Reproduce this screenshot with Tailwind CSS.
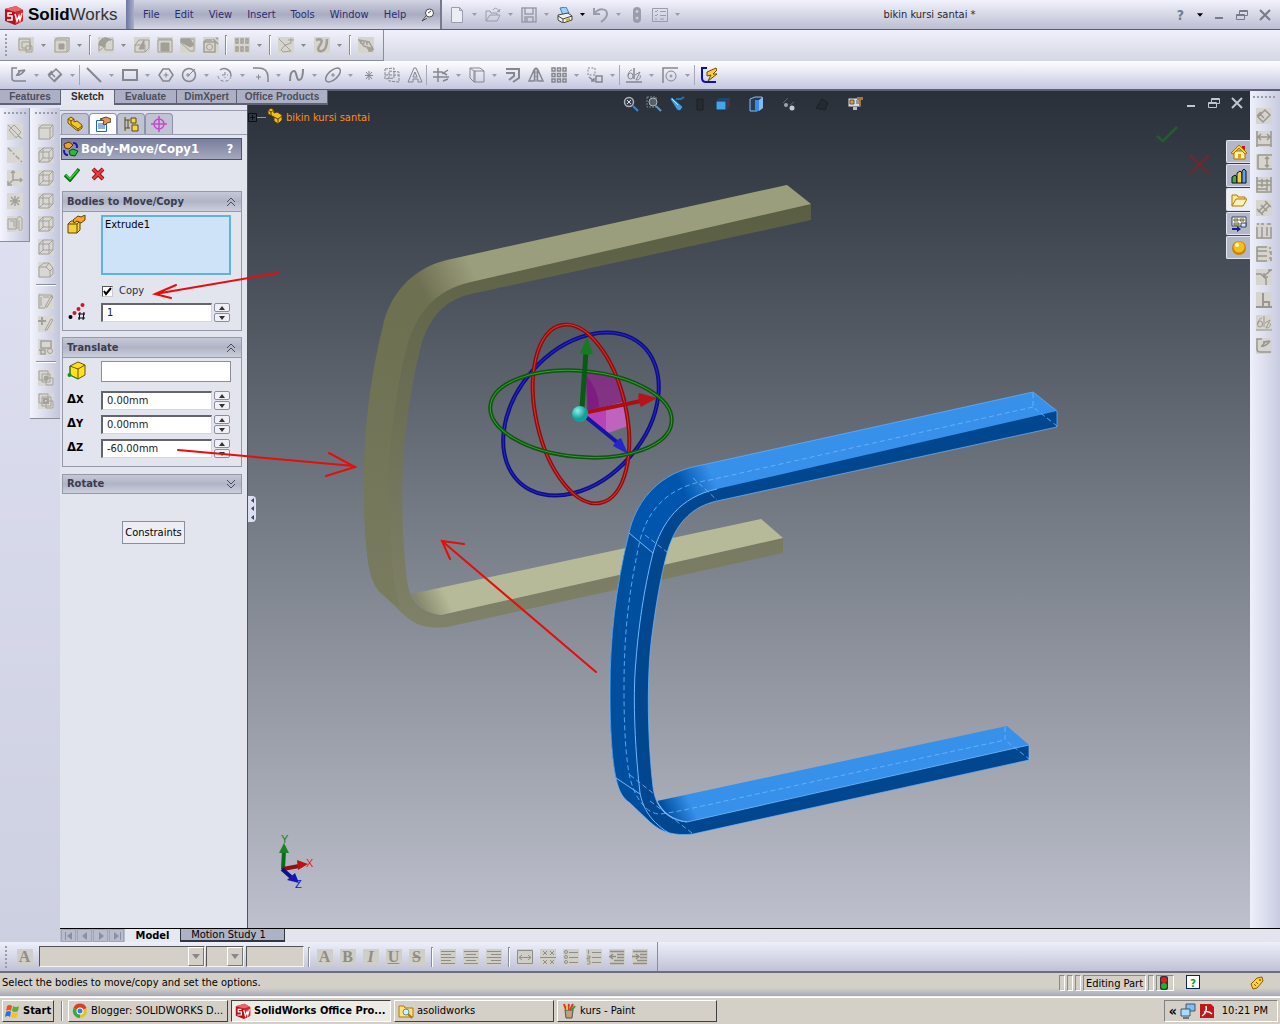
<!DOCTYPE html>
<html lang="en">
<head>
<meta charset="utf-8">
<meta name="viewport" content="width=device-width, initial-scale=1">
<title>SolidWorks - bikin kursi santai</title>
<script src="https://cdn.jsdelivr.net/npm/@tailwindcss/browser@4"></script>
</head>
<body class="flex min-h-screen flex-col overflow-x-hidden bg-[#dfe2f0] font-['DejaVu_Sans_Condensed','Noto_Sans',sans-serif] text-[11px] leading-4 text-black">

<!-- Shared glyphs -->
<svg class="absolute size-0" aria-hidden="true">
  <defs>
    <symbol id="dd" viewBox="0 0 5 3"><path d="M0 0h5L2.500 3z" fill="currentColor" stroke="none"/></symbol>
    <symbol id="cube" viewBox="0 0 16 16"><path d="M1 5h10v10H1zM1 5l4-4h10v10l-4 4M11 5l4-4M5 1v10h10M5 11l-4 4"/></symbol>
    <symbol id="sw" viewBox="0 0 20 20"><path d="M1 4l11-3 7 4v11l-8 4-10-4z" fill="#b3121b"/><path d="M1 4l11-3 7 4-8 2z" fill="#e8666b"/><path d="M11 7l8-2v11l-8 4z" fill="#d8232d"/><path d="M8 8H4v3h4v4H3M11 9l2 7 2-5 1 4 2-7" fill="none" stroke="#fff" stroke-width="1.500"/></symbol>
    <symbol id="restore" viewBox="0 0 12 12"><path d="M3.500 1.500h8v5h-8zM.5 5.500h8v5h-8z" fill="none" stroke="currentColor"/><path d="M3 2.500h9M0 6.500h9" stroke="currentColor"/></symbol>
    <symbol id="close" viewBox="0 0 12 12"><path d="M1 1l10 10M11 1L1 11" stroke="currentColor" stroke-width="2" fill="none"/></symbol>
    <symbol id="upglyph" viewBox="0 0 14 8"><path d="M4 6h6L7 2z" fill="#333" stroke="none"/></symbol>
    <symbol id="downglyph" viewBox="0 0 14 8"><path d="M4 2h6L7 6z" fill="#333" stroke="none"/></symbol>
  </defs>
</svg>

<!-- Title bar -->
<header class="flex h-[30px] shrink-0 items-stretch border-b border-[#5c5e6e] bg-linear-to-b from-[#f1f2fc] to-[#bcbfd2]">
  <div class="flex w-[126px] items-center gap-1 pl-1 font-['Liberation_Sans',Arial,sans-serif] text-[17px] text-black">
    <svg class="size-5"><use href="#sw"/></svg>
    <span><b>Solid</b><span class="text-[#333]">Works</span></span>
  </div>
  <div class="w-2 bg-linear-to-r from-[#6f76a0] to-[#a9aec8]"></div>
  <nav class="flex w-[308px] items-center gap-[15px] border-r-2 border-[#77798c] bg-linear-to-b from-[#d2d4e2] via-[#a9acc2] to-[#d5d7e6] pt-px pl-[9px] text-[#2c2c70]">
    <a href="#">File</a><a href="#">Edit</a><a href="#">View</a><a href="#">Insert</a><a href="#">Tools</a><a href="#">Window</a><a href="#">Help</a>
    <button aria-label="Pin menu"><svg class="size-3.5 fill-white stroke-[#444]" viewBox="0 0 14 14"><circle cx="8.500" cy="5" r="4"/><path d="M5 8l-4 5 5-3M7 5l3-2"/></svg></button>
  </nav>
  <div class="flex items-center fill-none stroke-[#9a9cab] pl-[3px] text-[#9a9cab] [&>button]:grid [&>button]:h-full [&>button]:w-[23px] [&>button]:place-items-center [&>[data-menu]]:w-[13px] [&>button>svg]:size-4 [&>[data-menu]>svg]:h-[3px] [&>[data-menu]>svg]:w-[5px]">
    <button aria-label="New"><svg viewBox="0 0 16 16"><path d="M2.500.5h8l3 3v12h-11zM10.500.5v3h3" fill="#eceef6"/></svg></button>
    <button data-menu aria-label="New options"><svg><use href="#dd"/></svg></button>
    <button aria-label="Open"><svg viewBox="0 0 16 16"><path d="M1 14V4h4l1 2h6v2M1 14l4-6h10l-3 6zM8 3c2-3 5-2 6 2M12 4l2 1 1-3"/></svg></button>
    <button data-menu aria-label="Open options"><svg><use href="#dd"/></svg></button>
    <button aria-label="Save"><svg viewBox="0 0 16 16"><path d="M1 1h14v14H1zM4 1v6h8V1M4 15v-5h8v5M6 11v4" stroke-width="1.500"/></svg></button>
    <button data-menu aria-label="Save options"><svg><use href="#dd"/></svg></button>
    <button aria-label="Print"><svg viewBox="0 0 16 16"><path d="M3 1l6-1 3 6-6 2z" fill="#9fd0f5" stroke="#3f7fb0"/><path d="M1 8l10-2 4 3v4l-9 3-5-3z" fill="#eee" stroke="#444"/><path d="M1 9l5 3 9-3M6 12v4" stroke="#444"/><path d="M9 13l4-1" stroke="#c8b020" stroke-width="2"/></svg></button>
    <button data-menu class="text-black" aria-label="Print options"><svg><use href="#dd"/></svg></button>
    <button aria-label="Undo"><svg viewBox="0 0 16 16"><path d="M1 1v6h6M2 6c4-5 12-5 12 1 0 4-3 6-6 8" stroke-width="2"/></svg></button>
    <button data-menu aria-label="Undo options"><svg><use href="#dd"/></svg></button>
    <button aria-label="Rebuild"><svg viewBox="0 0 16 16"><rect x="4.500" y=".5" width="7" height="15" rx="3" fill="#9a9cab"/><circle cx="8" cy="4.500" r="2" fill="#ccd"/><circle cx="8" cy="11" r="2" fill="#ccd"/></svg></button>
    <button aria-label="Options"><svg viewBox="0 0 16 16"><path d="M.5 1.500h15v13H.5zM3 4l1 1 2-2M3 8l1 1 2-2M3 12h2M8 4.500h6M8 8.500h6M8 12h4"/></svg></button>
    <button data-menu aria-label="More options"><svg><use href="#dd"/></svg></button>
  </div>
  <h1 class="grid flex-1 place-items-center pt-px pl-1.5 text-[#26262e]">bikin kursi santai *</h1>
  <div class="flex items-center text-[#777a88] [&>button]:grid [&>button]:w-[23px] [&>button]:place-items-center [&>button>svg]:size-3">
    <button class="-mr-1 text-sm font-bold" aria-label="Help">?</button>
    <button class="text-black" aria-label="Help options"><svg class="p-[3px]"><use href="#dd"/></svg></button>
    <button class="-ml-1" aria-label="Minimize"><svg viewBox="0 0 12 12"><path d="M2 9h8" stroke="currentColor" stroke-width="2"/></svg></button>
    <button aria-label="Restore"><svg><use href="#restore"/></svg></button>
    <button class="mr-1" aria-label="Close"><svg><use href="#close"/></svg></button>
  </div>
</header>

<!-- Features toolbar -->
<div class="flex h-[31px] shrink-0 bg-linear-to-b from-[#eff0fb] to-[#d5d7e4]">
  <div class="flex items-center border-r border-b border-[#8a8c98] bg-linear-to-b from-[#f1f2fd] to-[#cfd1df] fill-none stroke-[#a19f98] pr-1.5 pl-[5px] text-[#888] [&>button]:grid [&>button]:h-full [&>button]:w-[23px] [&>button]:place-items-center [&>[data-menu]]:w-[13px] [&>button>svg]:size-4 [&>button>svg]:bg-[#d6d4cf] [&>[data-menu]>svg]:h-[3px] [&>[data-menu]>svg]:w-[5px] [&>[data-menu]>svg]:bg-transparent [&>hr]:mx-[3px] [&>hr]:h-5 [&>hr]:w-0.5 [&>hr]:border-l [&>hr]:border-[#8a8c98] [&>hr]:bg-white">
    <span class="mr-[7px] h-[22px] border-l-2 border-dotted border-[#9a9cab]"></span>
    <button aria-label="Extruded boss"><svg viewBox="0 0 16 16"><path d="M1 2h11v11H1zM4 5h8v8M4 5v6h4M8 9h6v6H8z"/></svg></button>
    <button data-menu aria-label="Boss options"><svg><use href="#dd"/></svg></button>
    <button aria-label="Extruded cut"><svg viewBox="0 0 16 16"><path d="M1 3h12v12H1zM1 3l2-2h12v12l-2 2"/><path d="M5 7h5v5H5z" fill="#a19f98"/></svg></button>
    <button data-menu aria-label="Cut options"><svg><use href="#dd"/></svg></button>
    <hr>
    <button aria-label="Fillet"><svg viewBox="0 0 16 16"><path d="M1 8c0-4 3-7 7-7l7 2v10H7V9l-6 5z"/><path d="M1 8c0-4 3-7 7-7l5 2c-4 0-6 3-6 7z" fill="#a19f98"/></svg></button>
    <button data-menu aria-label="Fillet options"><svg><use href="#dd"/></svg></button>
    <button aria-label="Rib"><svg viewBox="0 0 16 16"><path d="M1 8h10v7H1zM1 8l4-5h10v8l-4 4"/><path d="M5 12l5-9v9z" fill="#a19f98"/></svg></button>
    <button aria-label="Shell"><svg viewBox="0 0 16 16"><path d="M1 3h14v12H1z"/><path d="M4 6h8v8H4zM1 2h14" fill="#a19f98"/></svg></button>
    <button aria-label="Draft"><svg viewBox="0 0 16 16"><path d="M1 2h13v12h-4L1 6z"/><path d="M1 2h9l4 6-4 2-9-5z" fill="#a19f98"/></svg></button>
    <button aria-label="Hole wizard"><svg viewBox="0 0 16 16"><path d="M1 5h11v10H1zM1 5l2-2h6M10 2l5 5M13 1l2 1M12 5v8" stroke-width="1.500"/><circle cx="6.500" cy="10" r="3"/></svg></button>
    <hr>
    <button aria-label="Linear pattern"><svg viewBox="0 0 16 16"><path d="M2 2h2v4H2zM7 2h2v4H7zM12 2h2v4h-2zM2 10h2v4H2zM7 10h2v4H7zM12 10h2v4h-2z" stroke-width="1.500"/></svg></button>
    <button data-menu aria-label="Pattern options"><svg><use href="#dd"/></svg></button>
    <hr>
    <button aria-label="Reference geometry"><svg viewBox="0 0 16 16"><path d="M1 2l6 6 6-2M3 13l4-5 6 6-8 1zM13 1v5M10 3h6"/></svg></button>
    <button data-menu aria-label="Geometry options"><svg><use href="#dd"/></svg></button>
    <button aria-label="Curves"><svg viewBox="0 0 16 16"><path d="M2 3c6-2 7 1 4 5s-2 7 2 6 5-6 5-12" stroke-width="2.500"/></svg></button>
    <button data-menu aria-label="Curve options"><svg><use href="#dd"/></svg></button>
    <hr>
    <button aria-label="Instant3D"><svg viewBox="0 0 16 16"><path d="M1 3l10 2 4 7-9-3zM3 4v3M6 4v3M9 5v3M9 11l5 3M14 10v4h-4" stroke-width="1.500"/></svg></button>
  </div>
</div>

<!-- Sketch toolbar -->
<div class="flex h-[30px] shrink-0 items-center border-b-2 border-[#5d6072] bg-linear-to-b from-white to-[#c5c7e0] fill-none stroke-[#85878f] pl-[7px] text-[#9a9cab] [&>button]:grid [&>button]:h-full [&>button]:w-[23px] [&>button]:place-items-center [&>[data-menu]]:w-[13px] [&>button>svg]:size-4 [&>[data-menu]>svg]:h-[3px] [&>[data-menu]>svg]:w-[5px] [&>hr]:h-5 [&>hr]:w-[3px] [&>hr]:border-0 [&>hr]:border-l [&>hr]:border-[#a5a7b8]">
  <button aria-label="Sketch"><svg viewBox="0 0 16 16"><path d="M6 1H1v10c0 2 1 3 3 3h11M5 8c3 1 7-2 9-5M7 4l7-1M6 8l3-4" stroke-width="1.500"/></svg></button>
  <button data-menu aria-label="Sketch options"><svg><use href="#dd"/></svg></button>
  <button aria-label="Smart dimension"><svg viewBox="0 0 16 16"><path d="M2 9l7-7 5 5-7 7zM1 8l4-4M5 7l3 3M7 15l8-8" stroke-width="1.500"/></svg></button>
  <button data-menu aria-label="Dimension options"><svg><use href="#dd"/></svg></button>
  <hr>
  <button aria-label="Line"><svg viewBox="0 0 16 16"><path d="M1 1l14 14" stroke-width="2"/></svg></button>
  <button data-menu aria-label="Line options"><svg><use href="#dd"/></svg></button>
  <button aria-label="Rectangle"><svg viewBox="0 0 16 16"><path d="M1 3h14v10H1z" stroke-width="2"/></svg></button>
  <button data-menu aria-label="Rectangle options"><svg><use href="#dd"/></svg></button>
  <button aria-label="Polygon"><svg viewBox="0 0 16 16"><path d="M5 2h6l4 6-4 6H5L1 8z" stroke-width="1.500"/><path d="M8 5.500v5M5.500 8h5"/></svg></button>
  <button aria-label="Circle"><svg viewBox="0 0 16 16"><circle cx="8" cy="8" r="6.500" stroke-width="1.500"/><path d="M5 8h4M7 6v4M8 8l6-6"/></svg></button>
  <button data-menu aria-label="Circle options"><svg><use href="#dd"/></svg></button>
  <button aria-label="Arc"><svg viewBox="0 0 16 16"><path d="M3 3c4-3 11-1 11 6" stroke-width="1.500"/><path d="M14 9c-1 7-12 7-13 0M5 8h6M8 5v6" stroke-dasharray="3 2"/></svg></button>
  <button data-menu aria-label="Arc options"><svg><use href="#dd"/></svg></button>
  <button aria-label="Sketch fillet"><svg viewBox="0 0 16 16"><path d="M0 1h5c6 0 10 3 10 9v5" stroke-width="1.500"/><path d="M3 10h5M5.500 7.500v5"/></svg></button>
  <button data-menu aria-label="Fillet options"><svg><use href="#dd"/></svg></button>
  <button aria-label="Spline"><svg viewBox="0 0 16 16"><path d="M1 14c0-7 1-10 4-10s2 9 5 9 4-4 4-11" stroke-width="2"/></svg></button>
  <button data-menu aria-label="Spline options"><svg><use href="#dd"/></svg></button>
  <button aria-label="Ellipse"><svg viewBox="0 0 16 16"><ellipse cx="8" cy="8" rx="9" ry="4.500" transform="rotate(-42 8 8)" stroke-width="1.500"/><path d="M6 8h4M8 6v4"/></svg></button>
  <button data-menu aria-label="Ellipse options"><svg><use href="#dd"/></svg></button>
  <button aria-label="Point"><svg viewBox="0 0 16 16"><path d="M8 4v9M4 8.500h8M5 5l6 7M11 5l-6 7"/></svg></button>
  <button aria-label="Construction plane"><svg viewBox="0 0 16 16"><path d="M1 2l9-1v10l-9 1zM5 4l10 1v10L5 14zM1 8h14" stroke-dasharray="3 1"/></svg></button>
  <button aria-label="Text"><svg viewBox="0 0 16 16"><path d="M7 1h2l6 14h-4v-3H6v3H1zM8 5l-2 5h4z"/></svg></button>
  <hr>
  <button aria-label="Trim entities"><svg viewBox="0 0 16 16"><path d="M5 1v14M0 5h9M0 10h16M9 7l6-4M9 5l5 3M10 14l5-2" stroke-width="1.500"/></svg></button>
  <button data-menu aria-label="Trim options"><svg><use href="#dd"/></svg></button>
  <button aria-label="Convert entities"><svg viewBox="0 0 16 16"><path d="M5 4h10v11H5zM1 1h10l4 3M1 1v10l4 4M1 1l4 3M6 4v11"/></svg></button>
  <button data-menu aria-label="Convert options"><svg><use href="#dd"/></svg></button>
  <button aria-label="Offset entities"><svg viewBox="0 0 16 16"><path d="M1 6h8v3l-5 4M1 2h13v9l-6 4" stroke-width="2"/></svg></button>
  <button aria-label="Mirror entities"><svg viewBox="0 0 16 16"><path d="M6.500 2L1 14h5.500M9.500 2L15 14H9.500M6 2h4M6.500 2v12M9.500 2v12" stroke-width="1.500"/><path d="M8 0v16" stroke-dasharray="3 1"/></svg></button>
  <button aria-label="Linear sketch pattern"><svg viewBox="0 0 16 16"><path d="M1 1h3v3H1zM6.500 1h3v3h-3zM12 1h3v3h-3zM1 6.500h3v3H1zM6.500 6.500h3v3h-3zM12 6.500h3v3h-3zM1 12h3v3H1zM6.500 12h3v3h-3zM12 12h3v3h-3z" stroke-width="1.500"/></svg></button>
  <button data-menu aria-label="Pattern options"><svg><use href="#dd"/></svg></button>
  <button aria-label="Move entities"><svg viewBox="0 0 16 16"><path d="M1 1h7v7H1z" stroke-dasharray="2 1.500"/><path d="M9 9h6v6H9zM2 10l5 4M7 11v3H4" stroke-width="1.500"/></svg></button>
  <button data-menu aria-label="Move options"><svg><use href="#dd"/></svg></button>
  <hr>
  <button aria-label="Display relations"><svg viewBox="0 0 16 16"><path d="M0 15h16M8 1v11" stroke-width="1.500"/><ellipse cx="4.500" cy="9" rx="2.500" ry="3"/><path d="M2 9c0-3 2-6 4-6M9 8l5-3-4 8c4 0 5-3 4-5"/></svg></button>
  <button data-menu aria-label="Relation options"><svg><use href="#dd"/></svg></button>
  <button aria-label="Quick snaps"><svg viewBox="0 0 16 16"><path d="M1 16V1h15" stroke-width="1.500"/><circle cx="9" cy="9" r="5"/><circle cx="9" cy="9" r="1"/></svg></button>
  <button data-menu aria-label="Snap options"><svg><use href="#dd"/></svg></button>
  <hr>
  <button aria-label="Rapid sketch"><svg viewBox="0 0 16 16"><path d="M6 1H1v10c0 3 2 4 4 4h10" stroke="#0b0bc8" stroke-width="2"/><path d="M15 1L6 5v4l4-1-3 6 9-7h-4l4-4z" fill="#ffd42a" stroke="#70420a"/></svg></button>
</div>

<main class="relative flex flex-1">
  <!-- Command tabs -->
  <nav class="absolute -top-px left-0 z-10 flex h-[15px] border-b-2 border-[#5f6272] bg-[#adb0c4] font-['Liberation_Sans',Arial,sans-serif] text-[10px] leading-[13px] font-bold text-[#4c4e5c] [&>a]:border-r [&>a]:border-[#5f6272] [&>a]:text-center">
    <a href="#" class="w-[61px]">Features</a>
    <a href="#" class="h-[15px] w-[54px] bg-[#e4e6f0] text-[#2c2c34]">Sketch</a>
    <a href="#" class="w-[62px]">Evaluate</a>
    <a href="#" class="w-[60px]">DimXpert</a>
    <a href="#" class="w-[91px]">Office Products</a>
  </nav>

  <!-- Left vertical toolbars -->
  <aside class="flex w-[60px] shrink-0 items-start bg-linear-to-b from-[#e1e3f4] to-[#cdd0e0] fill-none stroke-[#a3a19b] pt-[17px]">
    <div class="flex w-[30px] flex-col items-center border-r border-b border-[#8b8d9c] bg-linear-to-r from-[#f3f4fd] to-[#c3c6da] pt-1 pb-1.5 [&>button]:grid [&>button]:h-[23px] [&>button]:place-items-center [&>button>svg]:size-4 [&>button>svg]:bg-[#d9d7d3]">
      <span class="mb-1.5 w-[22px] border-t-2 border-dotted border-[#9a9cab]"></span>
      <button aria-label="Plane"><svg viewBox="0 0 16 16"><path d="M2 6l5-5 7 7-5 6zM1 1l14 14M11 12l4 3"/></svg></button>
      <button aria-label="Axis"><svg viewBox="0 0 16 16"><path d="M1 1l14 14" stroke-width="1.500" stroke-dasharray="5 2 2 2"/></svg></button>
      <button aria-label="Coordinate system"><svg viewBox="0 0 16 16"><path d="M6 1v9h9M6 10l-4 4M4 3l2-2 2 2M13 8l2 2-2 2M1 11v4h4" stroke-width="1.500"/></svg></button>
      <button aria-label="Reference point"><svg viewBox="0 0 16 16"><path d="M8 3v10M3 8h10M4 4l8 8M12 4l-8 8" stroke-width="1.500"/></svg></button>
      <button aria-label="Mate reference"><svg viewBox="0 0 16 16"><path d="M1 3h8v10H1zM3 5h4v6M10 13V3c0-3 5-3 5 0v10c0 2-3 2-3 0V4"/></svg></button>
    </div>
    <div class="flex w-[30px] flex-col items-center border-b border-[#8b8d9c] bg-linear-to-r from-[#f3f4fd] to-[#c3c6da] pt-1 pb-1.5 pl-0.5 [&>button]:grid [&>button]:h-[23px] [&>button]:place-items-center [&>button>svg]:size-4 [&>button>svg]:bg-[#d9d7d3] [&>hr]:my-[3px] [&>hr]:h-0.5 [&>hr]:w-5 [&>hr]:border-[#8b8d9c] [&>hr]:bg-white">
      <span class="mb-1.5 w-[22px] border-t-2 border-dotted border-[#9a9cab]"></span>
      <button aria-label="Front view"><svg viewBox="0 0 16 16"><path d="M1 4h11v11H1zM1 4l3-3h11v11l-3 3M12 4l3-3"/></svg></button>
      <button aria-label="Back view"><svg><use href="#cube"/></svg></button>
      <button aria-label="Left view"><svg><use href="#cube"/></svg></button>
      <button aria-label="Right view"><svg><use href="#cube"/></svg></button>
      <button aria-label="Top view"><svg><use href="#cube"/></svg></button>
      <button aria-label="Bottom view"><svg><use href="#cube"/></svg></button>
      <button aria-label="Isometric view"><svg viewBox="0 0 16 16"><path d="M1 5l5-4h5l4 5v6l-3 3H1zM1 5h7l4 4v6M8 5l3-4M12 9l3-3"/></svg></button>
      <hr>
      <button aria-label="Sketch plane"><svg viewBox="0 0 16 16"><path d="M1 2h13v3M1 2v13h6M3 4v9M5 4h6M7 14l6-11 2 1-6 10z"/></svg></button>
      <button aria-label="Add sketch"><svg viewBox="0 0 16 16"><path d="M4 1v8M0 5h8" stroke-width="2"/><path d="M7 14l6-11 2 1-6 10z"/></svg></button>
      <button aria-label="Modify sketch"><svg viewBox="0 0 16 16"><path d="M3 2h10v7H3zM1 11h6v3M3 11v4h5" stroke-width="1.500"/><circle cx="12" cy="12" r="2.500"/></svg></button>
      <hr>
      <button aria-label="Combine"><svg viewBox="0 0 16 16"><path d="M1 1h9v9H1zM4 4h8v8H4zM8 8h7v7H8z"/><circle cx="8" cy="8" r="2" fill="#a3a19b"/></svg></button>
      <button aria-label="Intersect"><svg viewBox="0 0 16 16"><path d="M1 1h9v9H1zM4 4h9v9H4zM8 8h7v7H8z"/><path d="M6 6h4v4H6z" stroke-width="2"/></svg></button>
    </div>
  </aside>

  <div class="flex min-w-0 flex-1 flex-col">
    <div class="flex flex-1">
      <!-- Property manager -->
      <section class="flex w-[188px] shrink-0 flex-col border-r border-[#50545f] bg-[#e2e5ee] pt-[19px]">
        <div class="flex h-[25px] items-end border-t border-b border-[#9a9db0] bg-[#dfe2ec] pl-px [&>button]:grid [&>button]:h-[21px] [&>button]:w-7 [&>button]:place-items-center [&>button]:rounded-t-sm [&>button]:border [&>button]:border-b-0 [&>button]:border-[#8f93a8] [&>button]:bg-[#c0c3d4] [&>button>svg]:size-4">
          <button aria-label="Feature tree"><svg viewBox="0 0 16 16" fill="#f7c81e" stroke="#6d5200"><path d="M1 3l3-2 3 2v3l3-1 5 4v3l-4 3-3-2-7-6z"/><path d="M1 3l3 2 3-2M4 5v3l7 5 4-3M11 13v2"/></svg></button>
          <button class="!bg-white" aria-label="Property manager"><svg viewBox="0 0 16 16"><path d="M1.500 4.500h10v11h-10z" fill="#fff" stroke="#1c62c0"/><path d="M3 8h7M3 10h7M3 12h7" stroke="#1c62c0"/><path d="M5 3l6-2 5 2v3l-4 1-2 2-2-1 1-3z" fill="#d79a5c" stroke="#6b3d16"/></svg></button>
          <button aria-label="Configurations"><svg viewBox="0 0 16 16" stroke="#5c4a00"><path d="M2 1v14M2 4h5M2 12h5M5 4v8" fill="none"/><path d="M8 2h5v5H8zM9 9h6v6H9z" fill="#f5d44a"/></svg></button>
          <button aria-label="DimXpert manager"><svg viewBox="0 0 16 16" fill="none" stroke="#c44bc8" stroke-width="1.500"><circle cx="8" cy="8" r="5"/><path d="M8 0v16M0 8h16"/></svg></button>
        </div>
        <div class="mt-[3px] mr-[5px] ml-px flex h-[22px] items-center gap-0.5 border border-[#4c5070] bg-linear-to-b from-[#787d9b] to-[#a5a9bf] px-px text-[13px] font-bold text-white">
          <svg class="size-4" viewBox="0 0 16 16"><path d="M1 3l5-2 4 3-4 4-4-1z" fill="#f2a02c" stroke="#5a3000"/><path d="M6 10l4-2 5 2-3 5-5-1z" fill="#2eb83a" stroke="#0a4a10"/><path d="M10 2c4 0 4 2 4 5M1 9c0 4 1 5 4 5" fill="none" stroke="#1414b8" stroke-width="2"/></svg>
          <h2 class="flex-1">Body-Move/Copy1</h2>
          <button class="w-5" aria-label="Feature help">?</button>
        </div>
        <div class="flex h-[31px] items-center gap-2.5 pb-1 pl-1 [&_svg]:size-4">
          <button aria-label="OK"><svg viewBox="0 0 16 16"><path d="M1 9l5 5L15 3" fill="none" stroke="#0d6e16" stroke-width="3.500"/><path d="M2 9l4 4 8-9" fill="none" stroke="#37d045" stroke-width="1.500"/></svg></button>
          <button aria-label="Cancel"><svg viewBox="0 0 16 16"><path d="M3 3l10 10M13 3L3 13" fill="none" stroke="#931018" stroke-width="4"/><path d="M3 3l10 10M13 3L3 13" fill="none" stroke="#ee3b42" stroke-width="2"/></svg></button>
        </div>

        <fieldset class="mr-[5px] ml-0.5 border border-[#9699ab] pb-2" aria-label="Bodies to Move/Copy">
          <button class="flex h-5 w-full items-center justify-between border-b border-[#9699ab] bg-linear-to-b from-[#c5c8d6] via-[#b1b4c6] to-[#ccd0dc] px-1 font-bold text-[#3a3c50]">Bodies to Move/Copy
            <svg class="mr-px size-2.5" viewBox="0 0 10 10" fill="none" stroke="#4a4d60"><path d="M1 5l4-4 4 4M1 9l4-4 4 4"/></svg></button>
          <div class="flex pt-[3px]">
            <svg class="mx-1 mr-3.5 size-5" viewBox="0 0 20 20" stroke="#5e4300"><path d="M1 9l3-3h9v9l-3 3H1z" fill="#f5cf3a"/><path d="M1 9h9v9M10 9l3-3" fill="none"/><path d="M6 5l5-4 3 1 4-2v5l-4 3-4-2-3 2z" fill="#f6a62c"/></svg>
            <textarea class="block h-[60px] w-[130px] resize-none border-2 border-[#5eb2e4] bg-[#cee3f7] px-0.5 leading-4 outline-none" aria-label="Selected bodies">Extrude1</textarea>
          </div>
          <label class="mt-2 ml-[39px] flex h-4 items-center gap-1.5 text-[#2c2e48]">
            <span class="relative grid size-[11px] place-items-center border border-t-[#555] border-l-[#555] border-[#ccc] bg-white"><input type="checkbox" checked class="absolute inset-0 size-full appearance-none"><svg class="size-[9px]" viewBox="0 0 9 9" fill="none" stroke="#000" stroke-width="2"><path d="M1 4l2 3 5-6"/></svg></span>Copy</label>
          <div class="mt-1 flex h-[19px]">
            <svg class="mr-3.5 ml-1 size-5" viewBox="0 0 20 20"><circle cx="3.500" cy="14" r="2"/><g fill="#d8102c"><circle cx="7.500" cy="10" r="2"/><circle cx="11.500" cy="6" r="2"/><circle cx="15.500" cy="2" r="2"/></g><path d="M13 9l-1 8M17 9l-1 8M11 11h7M11 15h7" stroke="#000"/></svg>
            <input class="w-[111px] border border-t-2 border-l-2 border-[#d5d5dd] border-t-[#63646c] border-l-[#63646c] bg-white px-1 text-[#222] outline-none" value="1" aria-label="Number of copies">
            <span class="ml-0.5 flex w-4 flex-col gap-px [&>button]:grid [&>button]:h-[9px] [&>button]:place-items-center [&>button]:rounded-xs [&>button]:border [&>button]:border-[#8b8e9c] [&>button]:bg-[#f0f1f6] [&_svg]:h-2 [&_svg]:w-3.5"><button aria-label="Increase"><svg><use href="#upglyph"/></svg></button><button aria-label="Decrease"><svg><use href="#downglyph"/></svg></button></span>
          </div>
        </fieldset>

        <fieldset class="mt-1.5 mr-[5px] ml-0.5 border border-[#9699ab] pb-2 [&_input]:text-[#222]" aria-label="Translate">
          <button class="flex h-5 w-full items-center justify-between border-b border-[#9699ab] bg-linear-to-b from-[#c5c8d6] via-[#b1b4c6] to-[#ccd0dc] px-1 font-bold text-[#3a3c50]">Translate
            <svg class="mr-px size-2.5" viewBox="0 0 10 10" fill="none" stroke="#4a4d60"><path d="M1 5l4-4 4 4M1 9l4-4 4 4"/></svg></button>
          <div class="flex pt-[3px]">
            <svg class="mr-3.5 ml-1 size-5" viewBox="0 0 20 20" stroke="#6d5200"><path d="M3 5l8-4 7 3v10l-7 4-8-4z" fill="#ffe21f"/><path d="M3 5l8 3v10M11 8l7-4" fill="none"/><path d="M3 5v9l8 4" fill="none" stroke="#1b8a24"/><circle cx="2.500" cy="14" r="2" fill="#1b8a24" stroke="none"/></svg>
            <input class="h-[21px] w-[130px] border border-[#8b8e9c] bg-white px-1 outline-none" aria-label="Translation reference">
          </div>
          <div class="mt-[9px] flex flex-col gap-[5px] [&>div]:flex [&>div]:h-[19px] [&_label]:w-[38px] [&_label]:pl-1 [&_label]:text-[13px] [&_label]:font-bold [&_input]:w-[111px] [&_input]:border [&_input]:border-t-2 [&_input]:border-l-2 [&_input]:border-[#d5d5dd] [&_input]:border-t-[#63646c] [&_input]:border-l-[#63646c] [&_input]:bg-white [&_input]:px-1 [&_input]:outline-none [&_button]:grid [&_button]:h-[9px] [&_button]:place-items-center [&_button]:rounded-xs [&_button]:border [&_button]:border-[#8b8e9c] [&_button]:bg-[#f0f1f6] [&_svg]:h-2 [&_svg]:w-3.5">
            <div><label for="dx">Δ<small class="text-[11px]">X</small></label><input id="dx" value="0.00mm"><span class="ml-0.5 flex w-4 flex-col gap-px"><button aria-label="Increase X"><svg><use href="#upglyph"/></svg></button><button aria-label="Decrease X"><svg><use href="#downglyph"/></svg></button></span></div>
            <div><label for="dy">Δ<small class="text-[11px]">Y</small></label><input id="dy" value="0.00mm"><span class="ml-0.5 flex w-4 flex-col gap-px"><button aria-label="Increase Y"><svg><use href="#upglyph"/></svg></button><button aria-label="Decrease Y"><svg><use href="#downglyph"/></svg></button></span></div>
            <div><label for="dz">Δ<small class="text-[11px]">Z</small></label><input id="dz" value="-60.00mm"><span class="ml-0.5 flex w-4 flex-col gap-px"><button aria-label="Increase Z"><svg><use href="#upglyph"/></svg></button><button aria-label="Decrease Z"><svg><use href="#downglyph"/></svg></button></span></div>
          </div>
        </fieldset>

        <button class="mt-[7px] mr-[5px] ml-0.5 flex h-5 items-center justify-between border border-[#9699ab] bg-linear-to-b from-[#c5c8d6] via-[#b1b4c6] to-[#ccd0dc] px-1 font-bold text-[#3a3c50]">Rotate
          <svg class="mr-px size-2.5" viewBox="0 0 10 10" fill="none" stroke="#4a4d60"><path d="M1 1l4 4 4-4M1 5l4 4 4-4"/></svg></button>
        <button class="mt-[27px] h-[23px] w-[63px] self-center border border-[#8b8e9c] bg-[#eceef4]">Constraints</button>
      </section>

      <!-- Graphics area -->
      <section class="relative min-w-0 flex-1 overflow-hidden bg-linear-to-b from-[#2a303a] via-[#747a83] to-[#bec1cd]">
        <svg class="absolute inset-0 size-full" viewBox="248 91 1002 837" preserveAspectRatio="xMinYMin meet" role="img" aria-label="Chair frame model">
          <defs>
            <path id="body" d="M1033 392L693 467C655 476 635 505 629 533C615 590 610 640 610 690C610 730 612 760 616 778C619 792 623 798 630 803L650 822C662 833 675 836 693 834L1029 760V745L687 822C665 820 655 805 653 787C648 745 646 680 652 635C656 605 660 580 667 553C675 525 690 507 717 501L1057 427V411Z"/>
            <path id="wide" d="M1033 392L693 467C655 476 635 505 629 533C615 590 610 640 610 690C610 730 612 760 616 778C619 792 630 803 645 814L640 793C634 740 633 690 636 660C639 620 646 580 653 553C662 522 680 497 717 489L1057 411Z"/>
            <path id="lower" d="M657 801L1007 726L1029 745L687 822C673 820 663 813 657 801Z"/>
            <linearGradient id="bluetop" gradientUnits="userSpaceOnUse" x1="680" y1="484" x2="710" y2="470"><stop offset="0" stop-color="#0056ad"/><stop offset="1" stop-color="#3790ea"/></linearGradient>
            <linearGradient id="bluelow" gradientUnits="userSpaceOnUse" x1="664" y1="810" x2="688" y2="798"><stop offset="0" stop-color="#00509f"/><stop offset="1" stop-color="#3790ea"/></linearGradient>
            <linearGradient id="creamtop" gradientUnits="userSpaceOnUse" x1="665" y1="490" x2="715" y2="468"><stop offset="0" stop-color="#6e7052"/><stop offset="1" stop-color="#9b9e7c"/></linearGradient>
            <linearGradient id="creamlow" gradientUnits="userSpaceOnUse" x1="664" y1="810" x2="690" y2="798"><stop offset="0" stop-color="#85876a"/><stop offset="1" stop-color="#b6ba98"/></linearGradient>
            <linearGradient id="creamside" x1="0" y1="0" x2="0" y2="1"><stop offset="0" stop-color="#585c41"/><stop offset="1" stop-color="#7f8268"/></linearGradient>
            <linearGradient id="creamwide" gradientUnits="userSpaceOnUse" x1="0" y1="530" x2="0" y2="810"><stop offset="0" stop-color="#7a7c60" stop-opacity="0"/><stop offset="1" stop-color="#7a7c60"/></linearGradient>
            <radialGradient id="ball" cx=".35" cy=".3"><stop offset="0" stop-color="#8ff0ea"/><stop offset="1" stop-color="#12a09b"/></radialGradient>
          </defs>

          <g transform="translate(-246 -207)">
            <use href="#body" fill="url(#creamside)"/>
            <use href="#wide" fill="url(#creamtop)"/>
            <use href="#wide" fill="url(#creamwide)"/>
            <use href="#lower" fill="url(#creamlow)"/>
          </g>

          <path d="M586 372q18-1 33 5l8 24-38 10z" fill="#8b2788" fill-opacity=".8"/>
          <path d="M586 375q13 16 13 32l-12 3z" fill="#7c1280" fill-opacity=".7"/>
          <path d="M588 411l39-10 1 25-20 7-20-15z" fill="#cf63cb" fill-opacity=".85"/>
          <path d="M588 411l18-5v26l-18-14z" fill="#b337b4" fill-opacity=".7"/>
          <g fill="none">
            <g transform="rotate(41 581 414)"><ellipse cx="581" cy="414" rx="65" ry="92" stroke="#0d0d86" stroke-width="4"/><ellipse cx="581" cy="414" rx="65" ry="92" stroke="#2a2ac4"/></g>
            <g transform="rotate(-12.600 581 414)"><ellipse cx="581" cy="414" rx="45" ry="91" stroke="#8e0c0c" stroke-width="4"/><ellipse cx="581" cy="414" rx="45" ry="91" stroke="#dc3434"/></g>
            <g transform="rotate(5 581 414)"><ellipse cx="581" cy="414" rx="91" ry="43" stroke="#0f540f" stroke-width="4"/><ellipse cx="581" cy="414" rx="91" ry="43" stroke="#3b9a3b"/></g>
          </g>
          <path d="M582 408l4-56" stroke="#0b5a14" stroke-width="5"/><path d="M587 337l-7 16q6 3 13 1z" fill="#177a22"/>
          <path d="M588 412l53-11" stroke="#a80f16" stroke-width="4"/><path d="M657 398l-18-5q-2 7 2 14z" fill="#b8121a"/>
          <path d="M586 417l32 26" stroke="#1414a6" stroke-width="4"/><path d="M628 454l-7-16q-5 2-8 8z" fill="#2626c8"/>
          <circle cx="580" cy="414" r="8" fill="url(#ball)"/>

          <use href="#body" fill="#00478f"/>
          <use href="#wide" fill="url(#bluetop)"/>
          <path d="M629 533C615 590 610 640 610 690C610 730 612 760 616 778C619 792 630 803 645 814L640 793C634 740 633 690 636 660C639 620 646 580 653 553Z" fill="#004f9f"/>
          <use href="#lower" fill="url(#bluelow)"/>
          <g fill="none" stroke="#6fb8ff">
            <use href="#body" stroke-opacity=".7"/>
            <path d="M717 489C680 497 662 522 653 553C646 580 639 620 636 660C633 690 634 740 640 793C643 808 650 822 672 835M629 533l24 20M616 778l24 16M657 801C663 813 673 820 687 822"/>
            <path d="M1033 407L710 480C668 486 648 510 640 540C627 600 624 640 624 690C624 730 626 760 630 778C634 795 645 814 660 814C680 812 690 808 1005 740M645 535l22 17M693 478l24 22M630 775l24 19M650 801l42 32M1033 393v14l24 19M1005 727v13l24 19" stroke-dasharray="5 3" stroke-opacity=".8"/>
          </g>

          <!-- Axis triad -->
          <path d="M283 869l1-19" stroke="#0d6a18" stroke-width="4"/><path d="M284 843l-5 10h10z" fill="#178324"/>
          <path d="M283 869l16-3" stroke="#8e1010" stroke-width="4"/><path d="M308 864l-11-4 1 10z" fill="#b81212"/>
          <path d="M282 869l9 8" stroke="#10108e" stroke-width="4"/><path d="M299 883l-4-10-8 7z" fill="#1616b4"/>
          <g font-family="Liberation Sans" font-size="11"><text x="281" y="843" fill="#1d7a2a">Y</text><text x="306" y="867" fill="#e01c2c">X</text><text x="295" y="888" fill="#1414d0">Z</text></g>

          <!-- Confirmation corner -->
          <path d="M1157 136l6 5 14-14" fill="none" stroke="#265a30" stroke-width="2.500"/>
          <path d="M1190 155l19 19M1209 155l-19 19" fill="none" stroke="#6a2b30" stroke-width="2"/>

          <!-- Feature tree root marker -->
          <path d="M248.500 113.500h8v8h-8zM250 117.500h5M252.500 115v5M257 117.500h9" fill="none" stroke="#0c0e12"/><path d="M257 117.500h9" stroke="#b09a40"/>
          <path d="M268 110l3-2 3 2v3l3-1 5 3v5l-4 4-4-3v-4l-6-3z" fill="#f0c020" stroke="#5b3c00"/><path d="M268 110l3 2 3-2M271 112v4M274 117l4 2 4-3M278 119v4" fill="none" stroke="#5b3c00"/>
        </svg>
        <a href="#" class="absolute top-[19px] left-[38px] text-[#ff8c1a]">bikin kursi santai</a>

        <div class="absolute top-[5px] left-[371px] flex w-[252px] [&>button]:grid [&>button]:w-[23px] [&>button]:place-items-center [&_svg]:size-4">
          <button aria-label="Zoom to fit"><svg viewBox="0 0 16 16"><circle cx="6" cy="6" r="4.500" fill="#33404c" stroke="#aab4bd" stroke-width="1.500"/><path d="M4 4l4 4M8 4L4 8" stroke="#dde"/><path d="M10 10l5 5" stroke="#3d86c8" stroke-width="2"/></svg></button>
          <button aria-label="Zoom to area"><svg viewBox="0 0 16 16"><path d="M1 1h9v10H1z" fill="none" stroke="#7d858e" stroke-dasharray="2 1"/><circle cx="7" cy="6" r="4" fill="#55606b" stroke="#aab4bd"/><path d="M10 10l5 5" stroke="#5b9ad2" stroke-width="2"/></svg></button>
          <button aria-label="Previous view"><svg viewBox="0 0 16 16"><path d="M1 3l2-2 11 10-3 4-3-1z" fill="#4d9bd8" stroke="#123c66"/><path d="M3 3l6 6" stroke="#cfe6f8"/><path d="M7 3h5l3-2" fill="none" stroke="#2f6fa5" stroke-width="2"/></svg></button>
          <button aria-label="Section view"><svg viewBox="0 0 16 16"><path d="M5 3h6v11H5z" fill="#262b32" stroke="#1d2127"/></svg></button>
          <button aria-label="View orientation"><svg viewBox="0 0 16 16"><path d="M1 5h10v9H1z" fill="#4aa3e2" stroke="#14314e"/><path d="M1 5l3-3h11v8l-4 4V5z" fill="#20456a"/><path d="M12 4l3 1v6l-3 1z" fill="#5c2d36"/></svg></button>
          <button class="ml-[10px]" aria-label="Display style"><svg viewBox="0 0 16 16"><path d="M2 3l5-2h7v11l-5 3H2z" fill="#263c56" stroke="#8ebce8"/><path d="M7 4h4v11H7z" fill="#3b8ce0"/><path d="M11 4l4-3v11l-4 3z" fill="#7fbcf5"/></svg></button>
          <button class="ml-[10px]" aria-label="Hide items"><svg viewBox="0 0 16 16"><path d="M2 7l5-5M9 9l4-3" stroke="#59616b"/><circle cx="5" cy="9" r="2" fill="#9ba5b0"/><circle cx="11" cy="12" r="2.500" fill="#c2ccd6"/></svg></button>
          <button class="ml-[10px]" aria-label="Appearance"><svg viewBox="0 0 16 16"><path d="M2 12l6-9 6 4-3 7z" fill="#242a31" stroke="#1c2026"/></svg></button>
          <button class="ml-[10px]" aria-label="View settings"><svg viewBox="0 0 16 16"><path d="M1 2h13v9H1z" fill="#d9dde2" stroke="#333"/><path d="M3 4h4v4H3zM9 5h4M9 7h4" fill="#e59c3c" stroke="#555"/><path d="M6 11h4v3H6z" fill="#b9bec5"/><path d="M10 1h6v3h-2v6h-2V4h-2z" fill="#a8763c"/></svg></button>
        </div>

        <div class="absolute top-1.5 right-0 flex pr-0.5 text-[#c2c5cc] [&>button]:grid [&>button]:w-[23px] [&>button]:place-items-center [&_svg]:size-3">
          <button aria-label="Minimize document"><svg viewBox="0 0 12 12"><path d="M2 9h8" stroke="currentColor" stroke-width="2"/></svg></button>
          <button aria-label="Restore document"><svg><use href="#restore"/></svg></button>
          <button aria-label="Close document"><svg><use href="#close"/></svg></button>
        </div>

        <!-- Task pane tabs -->
        <div class="absolute top-[49px] right-0 flex w-6 flex-col gap-px [&>button]:grid [&>button]:h-[23px] [&>button]:place-items-center [&>button]:rounded-l-xs [&>button]:border [&>button]:border-r-0 [&>button]:border-[#e4e6ef] [&>button]:bg-[#b4b7c9] [&_svg]:size-4">
          <button aria-label="Resources"><svg viewBox="0 0 16 16"><path d="M11 2h3v5h-3z" fill="#b0241c"/><path d="M3 7h11v8H3z" fill="#fff0a8" stroke="#a87400"/><path d="M0 9l8-8 8 8-2 1-6-6-6 6z" fill="#ffd23a" stroke="#a87400"/><path d="M7 10h3v5H7z" fill="#e0a21e"/></svg></button>
          <button aria-label="Design library"><svg viewBox="0 0 16 16" stroke="#111"><path d="M1 9l3-2 2 2v6H1z" fill="#3fae49"/><path d="M6 5l3-2 2 2v10H6z" fill="#f5cf3a"/><path d="M11 3l2-2 2 2v12h-4z" fill="#5f9ff0"/></svg></button>
          <button class="!bg-[#eceef6]" aria-label="File explorer"><svg viewBox="0 0 16 16"><path d="M1 14V3h5l1 2h7v3" fill="#ffe898" stroke="#b07800"/><path d="M1 14l4-7h11l-4 7z" fill="#fff2b8" stroke="#b07800"/></svg></button>
          <button aria-label="View palette"><svg viewBox="0 0 16 16"><path d="M1 1h14v9H1z" fill="#fff" stroke="#345"/><path d="M3 3h4v2H3zM9 3h4v2H9zM3 7h5v2H3z" fill="#e8da20" stroke="#666"/><path d="M1 12h5v-2l4 3-4 3v-2H1z" fill="#1a1a98"/><path d="M10 7h5v4h-5z" fill="#dbe4f4" stroke="#345"/></svg></button>
          <button aria-label="Appearances"><svg viewBox="0 0 16 16"><circle cx="8" cy="8" r="7" fill="#c88400"/><circle cx="8" cy="7" r="5.500" fill="#f5be18"/><circle cx="6" cy="5" r="2" fill="#fff6c8"/></svg></button>
        </div>

        <!-- Panel splitter handle -->
        <button class="absolute top-[405px] left-0 flex h-[26px] w-2 flex-col items-center justify-around rounded-r-sm bg-[#dcdff0] text-[#3c4066]" aria-label="Collapse panel">
          <svg class="h-[5px] w-[3px] fill-current" viewBox="0 0 3 5"><path d="M3 0v5L0 2.500z"/></svg><svg class="h-[5px] w-[3px] fill-current" viewBox="0 0 3 5"><path d="M3 0v5L0 2.500z"/></svg><svg class="h-[5px] w-[3px] fill-current" viewBox="0 0 3 5"><path d="M3 0v5L0 2.500z"/></svg>
        </button>
      </section>

      <!-- Right dimension toolbar -->
      <aside class="flex w-[30px] shrink-0 flex-col items-center bg-linear-to-r from-[#eef0fb] to-[#c9cce0] fill-none stroke-[#99978f] pt-[5px] pr-0.5 [&>button]:grid [&>button]:h-[23px] [&>button]:place-items-center [&>button>svg]:size-4 [&>button>svg]:bg-[#d6d4cf]">
        <span class="mb-1.5 w-[22px] border-t-2 border-dotted border-[#9a9cab]"></span>
        <button aria-label="Smart dimension"><svg viewBox="0 0 16 16"><path d="M2 9l7-7 5 5-7 7zM1 8l4-4M5 7l3 3" stroke-width="1.500"/></svg></button>
        <button aria-label="Horizontal dimension"><svg viewBox="0 0 16 16"><path d="M1 0v16M15 0v16M1 14h14M2 6h12M5 3L2 6l3 3M11 3l3 3-3 3" stroke-width="1.500"/></svg></button>
        <button aria-label="Vertical dimension"><svg viewBox="0 0 16 16"><path d="M2 1v14M2 1h14M2 15h14M11 3v10M9 5l2-2 2 2M9 11l2 2 2-2" stroke-width="1.500"/></svg></button>
        <button aria-label="Baseline dimension"><svg viewBox="0 0 16 16"><path d="M1 0v15h14V0M1 4h14M1 8h14M1 12h10M6 2v8M11 2v12" stroke-width="1.500"/></svg></button>
        <button aria-label="Ordinate dimension"><svg viewBox="0 0 16 16"><path d="M1 9l6 6M5 5l6 6M9 1l6 6M2 12l9-9M5 14l9-9" stroke-width="1.500"/></svg></button>
        <button aria-label="Horizontal ordinate"><svg viewBox="0 0 16 16"><path d="M1 4v11h14V4M6 4v11M11 4v9M1 1h2M5 1h3M11 1h4" stroke-width="1.500"/></svg></button>
        <button aria-label="Vertical ordinate"><svg viewBox="0 0 16 16"><path d="M1 1v14h10M1 5h10M1 10h10M1 1h10M14 1v2M13 6h2v3M13 12h2v3" stroke-width="1.500"/></svg></button>
        <button aria-label="Chamfer dimension"><svg viewBox="0 0 16 16"><path d="M0 5h5l5 5v6M15 1L7 8M12 1h4M8 4v4h4" stroke-width="1.500"/></svg></button>
        <button aria-label="Add relation"><svg viewBox="0 0 16 16"><path d="M0 15h16M7 1v14M8 10h5v5" stroke-width="2"/></svg></button>
        <button aria-label="Display relations"><svg viewBox="0 0 16 16"><path d="M0 15h16M8 1v11"/><ellipse cx="4" cy="9" rx="2.500" ry="3"/><path d="M2 9c0-3 2-6 4-6M9 8l5-3-4 8c4 0 5-3 4-5"/></svg></button>
        <button aria-label="Edit sketch"><svg viewBox="0 0 16 16"><path d="M6 1H1v10c0 2 1 3 3 3h11M5 8c3 1 7-2 9-5M7 4l7-1M6 8l3-4" stroke-width="1.500"/></svg></button>
      </aside>
    </div>

    <!-- Model tabs -->
    <nav class="flex h-3.5 shrink-0 border-t border-black bg-[#e2e5ee] leading-[13px]">
      <div class="flex w-[65px] gap-px bg-[#b9bccd] pl-px fill-[#8b8fa6] [&>button]:w-[15px] [&>button]:border [&>button]:border-[#a0a3b7] [&_svg]:mx-auto [&_svg]:size-2.5">
        <button aria-label="First tab"><svg viewBox="0 0 10 10"><path d="M1 1h1v8H1zM8 1v8L3 5z"/></svg></button>
        <button aria-label="Previous tab"><svg viewBox="0 0 10 10"><path d="M7 1v8L2 5z"/></svg></button>
        <button aria-label="Next tab"><svg viewBox="0 0 10 10"><path d="M3 1v8l5-4z"/></svg></button>
        <button aria-label="Last tab"><svg viewBox="0 0 10 10"><path d="M2 1v8l5-4zM8 1h1v8H8z"/></svg></button>
      </div>
      <a href="#" class="w-[55px] bg-[#e6e8f2] text-center font-bold">Model</a>
      <a href="#" class="w-[105px] border border-t-0 border-b-2 border-[#33353f] bg-[#aeb2c6] pr-2 text-center leading-3">Motion Study 1</a>
    </nav>
  </div>

  <!-- Markup arrows -->
  <svg class="pointer-events-none absolute inset-0 size-full" viewBox="0 91 1280 851" preserveAspectRatio="xMinYMin meet" fill="none" stroke="#e80c0c" stroke-width="2" stroke-linecap="round" aria-hidden="true">
    <path d="M278 273L155 294M176 285l-21 9 16 4M178 450l176 16M329 453l26 14-29 9M596 672L442 541M464 544l-22-3 8 18"/>
  </svg>
</main>

<!-- Text formatting bar -->
<div class="flex h-[31px] shrink-0 items-center border-b-2 border-[#6a6e80] bg-linear-to-b from-[#edeffa] to-[#c0c3d6] fill-none stroke-[#8f8d86] pl-[5px] [&>button]:grid [&>button]:w-[23px] [&>button]:place-items-center [&>button>span]:grid [&>button>span]:size-4 [&>button>span]:place-items-center [&>button>span]:bg-[#d0cec8] [&>button>span]:font-['Liberation_Serif',serif] [&>button>span]:text-base [&>button>span]:leading-4 [&>button>span]:font-bold [&>button>span]:text-[#8f8d86] [&>button>svg]:size-4 [&>button>svg]:bg-[#d0cec8] [&>hr]:mx-[3px] [&>hr]:h-5 [&>hr]:w-0.5 [&>hr]:border-l [&>hr]:border-[#8a8c98] [&>hr]:bg-white">
  <span class="mr-1.5 h-[22px] border-l-2 border-dotted border-[#9a9cab]"></span>
  <button aria-label="Font"><span>A</span></button>
  <span class="ml-[3px] flex h-[21px] w-[166px] border border-[#f4f4f4] border-t-[#555] border-l-[#555] bg-[#d4d0c8]"><select class="min-w-0 flex-1 appearance-none" aria-label="Font family"></select><i class="grid w-4 place-items-center border border-t-white border-l-white border-[#777] text-[#888]"><svg class="h-[5px] w-2"><use href="#dd"/></svg></i></span>
  <span class="ml-px flex h-[21px] w-[38px] border border-[#f4f4f4] border-t-[#555] border-l-[#555] bg-[#d4d0c8]"><select class="min-w-0 flex-1 appearance-none" aria-label="Font size"></select><i class="grid w-4 place-items-center border border-t-white border-l-white border-[#777] text-[#888]"><svg class="h-[5px] w-2"><use href="#dd"/></svg></i></span>
  <input class="mr-px ml-0.5 h-[21px] w-[58px] border border-[#f4f4f4] border-t-[#555] border-l-[#555] bg-[#d4d0c8] outline-none" aria-label="Text height">
  <hr>
  <button aria-label="Color"><span>A</span></button>
  <button aria-label="Bold"><span>B</span></button>
  <button aria-label="Italic"><span class="italic">I</span></button>
  <button aria-label="Underline"><span class="underline">U</span></button>
  <button aria-label="Strikethrough"><span class="line-through">S</span></button>
  <hr>
  <button aria-label="Align left"><svg viewBox="0 0 16 16"><path d="M1 2.500h14M1 5.500h10M1 8.500h14M1 11.500h10M1 14.500h14"/></svg></button>
  <button aria-label="Center"><svg viewBox="0 0 16 16"><path d="M1 2.500h14M3 5.500h10M1 8.500h14M3 11.500h10M1 14.500h14"/></svg></button>
  <button aria-label="Align right"><svg viewBox="0 0 16 16"><path d="M1 2.500h14M5 5.500h10M1 8.500h14M5 11.500h10M1 14.500h14"/></svg></button>
  <hr>
  <button aria-label="Fit text"><svg viewBox="0 0 16 16"><path d="M.5 1.500h15v13H.5zM2 8.500h12M5 6L2 8.500 5 11M11 6l3 2.500-3 2.500"/></svg></button>
  <button aria-label="Stack"><svg viewBox="0 0 16 16"><path d="M3 2l4 4M7 2L3 6M10 2l4 4M14 2l-4 4M0 8.500h16M3 11l4 4M7 11l-4 4M10 11l4 4M14 11l-4 4"/></svg></button>
  <button aria-label="Bullets"><svg viewBox="0 0 16 16"><circle cx="3" cy="3" r="1.500"/><circle cx="3" cy="8" r="1.500"/><circle cx="3" cy="13" r="1.500"/><path d="M6 3.500h9M6 8.500h9M6 13.500h9"/></svg></button>
  <button aria-label="Numbering"><svg viewBox="0 0 16 16"><path d="M2.500 1v4M1 7h3v2H1v1h3M1 12h3v3H1M6 3.500h9M6 8.500h9M6 13.500h9"/></svg></button>
  <button aria-label="Decrease indent"><svg viewBox="0 0 16 16"><path d="M1 2.500h14M8 5.500h7M8 8.500h7M5 11.500h10M1 14.500h14M7 7.500H1M4 5L1 7.500 4 10" stroke-width="1.500"/></svg></button>
  <button aria-label="Increase indent"><svg viewBox="0 0 16 16"><path d="M1 2.500h14M8 5.500h7M8 8.500h7M5 11.500h10M1 14.500h14M0 7.500h6M4 5l3 2.500L4 10" stroke-width="1.500"/></svg></button>
  <span class="ml-1.5 h-full border-l border-[#8a8c98]"></span>
</div>

<!-- Status bar -->
<div class="flex h-6 shrink-0 items-start border-b border-[#f2f2f2] bg-linear-to-b from-[#d4d0c8] from-65% to-[#a5a8b8] pt-0.5 pl-0.5">
  <p class="flex-1">Select the bodies to move/copy and set the options.</p>
  <div class="flex h-4 gap-0.5 pr-4 [&>span]:border [&>span]:border-t-[#888] [&>span]:border-l-[#888] [&>span]:border-white [&_svg]:size-3.5">
    <span class="w-1.5"></span><span class="w-1.5"></span><span class="w-1.5"></span>
    <span class="w-[63px] text-center leading-[15px]">Editing Part</span>
    <span class="w-1.5"></span>
    <span class="w-[18px]"><svg viewBox="0 0 14 14"><rect x="3" width="8" height="14" rx="2" fill="#333"/><circle cx="7" cy="4" r="3" fill="#e02020"/><circle cx="7" cy="10" r="3" fill="#20b030"/></svg></span>
    <button class="ml-2.5 grid size-3.5 place-items-center border border-[#125] bg-white font-bold text-[#0a9a20]" aria-label="Quick tips">?</button>
    <button class="ml-12" aria-label="Tags"><svg viewBox="0 0 14 14"><path d="M1 8l6-6 5-1 1 4-6 7-4 1z" fill="#ffd040" stroke="#8a5c00"/><circle cx="10" cy="4" r="1" fill="#8a5c00"/><path d="M4 8l2 2M6 6l2 2" stroke="#8a5c00"/></svg></button>
  </div>
</div>

<!-- Windows taskbar -->
<footer class="flex h-[27px] shrink-0 items-center border-t border-white bg-[#d4d0c8] pr-0.5 pl-0.5">
  <button class="flex h-[22px] w-[52px] items-center gap-0.5 border border-t-white border-l-white border-[#404040] pl-0.5 font-bold"><svg class="size-4" viewBox="0 0 16 16"><path d="M2 3q3-2 5 0L6 8Q4 6 1 8z" fill="#e8542a"/><path d="M8 3q3 2 6 0l-1 5q-3 2-6 0z" fill="#5cb02c"/><path d="M1 9q3-2 5 0l-1 5q-2-2-5 0z" fill="#2f6fe0"/><path d="M7 9q3 2 6 0l-1 5q-3 2-6 0z" fill="#f5c21e"/></svg>Start</button>
  <span class="mr-[5px] ml-[7px] h-5 w-0.5 border-l border-[#808080] bg-white"></span>
  <nav class="flex flex-1 gap-[3px] [&>button]:flex [&>button]:h-[22px] [&>button]:w-40 [&>button]:items-center [&>button]:gap-[3px] [&>button]:border [&>button]:border-t-white [&>button]:border-l-white [&>button]:border-r-[#404040] [&>button]:border-b-[#404040] [&>button]:pl-[3px] [&>button]:whitespace-nowrap [&_svg]:size-4">
    <button><svg viewBox="0 0 16 16"><circle cx="8" cy="8" r="7" fill="#e2c41e"/><path d="M8 8L1.500 5A7 7 0 0 1 14.500 5z" fill="#dd3c2c"/><path d="M8 8L1.500 5A7 7 0 0 0 8 15z" fill="#3aa648"/><circle cx="8" cy="8" r="3.500" fill="#fff"/><circle cx="8" cy="8" r="2.500" fill="#3c7ce0"/></svg>Blogger: SOLIDWORKS D...</button>
    <button class="!border-t-[#404040] !border-l-[#404040] !border-r-white !border-b-white bg-[#ecebe6] font-bold"><svg><use href="#sw"/></svg>SolidWorks Office Pro...</button>
    <button><svg viewBox="0 0 16 16"><path d="M1 14V3h5l1 2h8v9z" fill="#ffe27a" stroke="#b07800"/><circle cx="8" cy="9" r="3" fill="#d8ecff" stroke="#5a88b8"/><path d="M10 11l4 4" stroke="#b07800" stroke-width="2"/></svg>asolidworks</button>
    <button><svg viewBox="0 0 16 16"><path d="M4 7h8l-1 8H5z" fill="#c0a080" stroke="#555"/><path d="M5 7L3 1M7 7l1-6M9 7l3-6" stroke="#d03a2a" stroke-width="2"/><path d="M11 7l3-4" stroke="#2a9a3a" stroke-width="2"/><path d="M6 7V3" stroke="#e8c020" stroke-width="2"/></svg>kurs - Paint</button>
  </nav>
  <div class="flex h-[22px] items-center gap-[3px] border border-t-[#808080] border-l-[#808080] border-white pr-[9px] pl-1 [&_svg]:size-4">
    <button class="text-sm font-bold" aria-label="Show hidden icons">«</button>
    <svg viewBox="0 0 16 16"><path d="M6 1h9v7H6z" fill="#7cc0f5" stroke="#456"/><path d="M1 6h9v7H1z" fill="#a8dcff" stroke="#456"/><path d="M3 15h6" stroke="#678" stroke-width="2"/></svg>
    <svg viewBox="0 0 16 16"><path d="M1 1h11l3 3v11H1z" fill="#c01818"/><path d="M3 13c3-2 5-6 4-10M5 9c3-1 6 0 8 2" fill="none" stroke="#fff" stroke-width="1.500"/></svg>
    <time class="ml-1">10:21 PM</time>
  </div>
</footer>
</body>
</html>
